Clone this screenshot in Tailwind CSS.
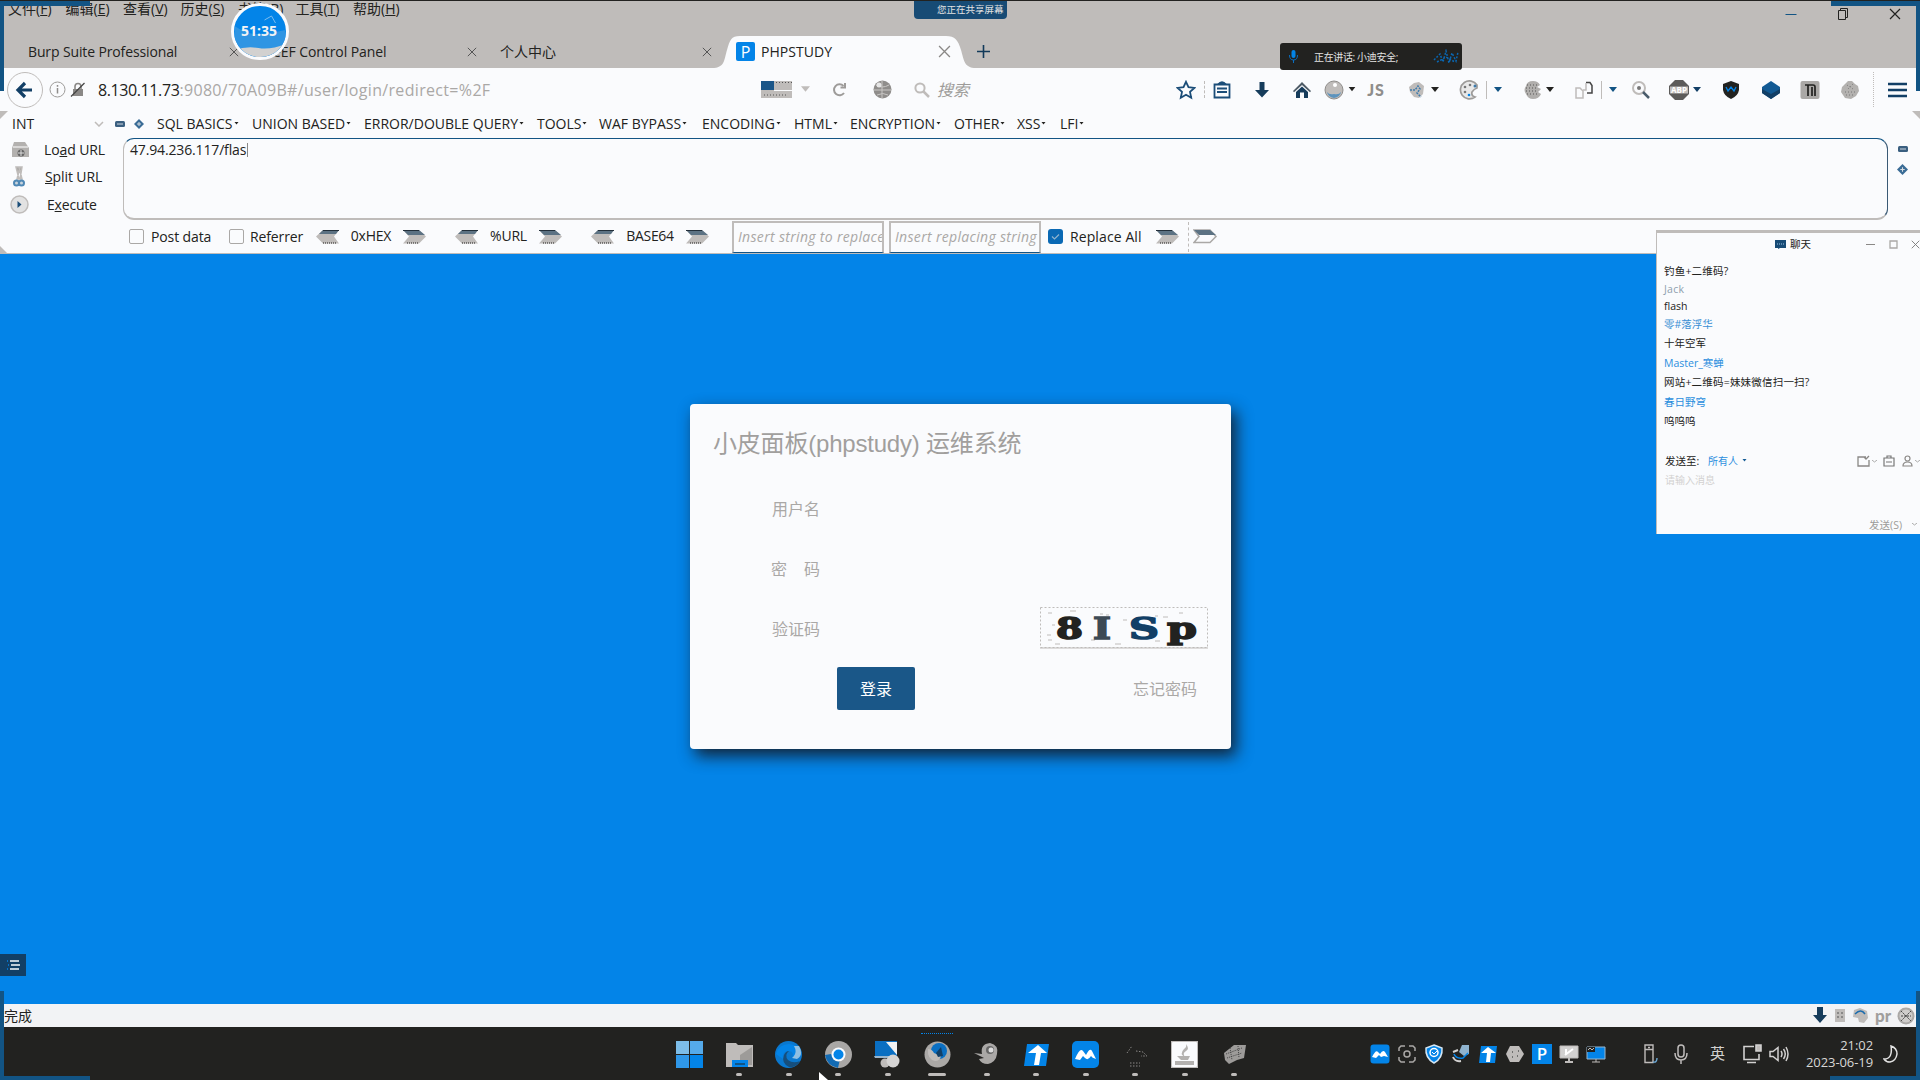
<!DOCTYPE html>
<html lang="zh-CN">
<head>
<meta charset="utf-8">
<title>PHPSTUDY</title>
<script src="https://cdn.jsdelivr.net/npm/@tailwindcss/browser@4"></script>
</head>
<body class="w-[1920px] h-[1080px] overflow-hidden bg-[#0384e8] text-[#222220] font-['Open_Sans','Noto_Sans_CJK_SC',sans-serif] text-[14px] leading-none whitespace-nowrap">
<svg class="hidden">
  <symbol id="caret" viewBox="0 0 8 6"><path d="M0 0h8L4 5z" fill="currentColor"/></symbol>
  <symbol id="x" viewBox="0 0 12 12"><path d="M1 1l10 10M11 1L1 11" stroke="currentColor" stroke-width="1.2" fill="none"/></symbol>
  <symbol id="arr" viewBox="0 0 25 15"><path d="M1 1h16l7 6.500-7 7H1l6-7z" fill="#bfbcba"/><path d="M1 1h16l6 5H6z" fill="#5c7283"/><path d="M1 1.500h16" stroke="#222f3a"/><path d="M5 14h12" stroke="#222220" stroke-dasharray="1 1"/></symbol>
  <symbol id="arl" viewBox="0 0 25 15"><path d="M24 1H8L1 7.500l7 7h16l-5-7z" fill="#bfbcba"/><path d="M24 1H8L4 5h17z" fill="#5c7283"/><path d="M8 1.500h16" stroke="#222f3a"/><path d="M8 14h14" stroke="#222220" stroke-dasharray="1 1"/></symbol>
  <symbol id="diamond" viewBox="0 0 10 10"><path d="M5 0l5 5-5 5-5-5z" fill="#3a6c96"/><path d="M5 3v4M3 5h4" stroke="#d8dde2"/></symbol>
  <symbol id="minus" viewBox="0 0 10 6"><rect width="10" height="6" rx="1.500" fill="#3a5f80"/><path d="M2 3h6" stroke="#cfd8e0"/></symbol>
</svg>
<div class="relative flex h-[1080px] w-[1920px] flex-col">

  <!-- window title area -->
  <header class="flex h-[68px] flex-col border-t border-[#222220] bg-[#bfbcba]">
    <div class="flex h-[34px]">
      <nav class="flex h-[16px] items-center pl-[8px] text-[14px] *:w-[57.500px]">
        <span>文件(<u>F</u>)</span><span>编辑(<u>E</u>)</span><span>查看(<u>V</u>)</span><span>历史(<u>S</u>)</span><span>书签(<u>B</u>)</span><span>工具(<u>T</u>)</span><span>帮助(<u>H</u>)</span>
      </nav>
      <div class="ml-auto flex h-[26px] items-center gap-[40px] pr-[19px]">
        <svg class="h-3 w-3" viewBox="0 0 12 12"><path d="M.5 6.500h11" stroke="#125484"/></svg>
        <svg class="h-3 w-3" viewBox="0 0 12 12" fill="none" stroke="#222220"><path d="M1.500 2.500h7v9h-7zM3.500 2V.5h7v9H9"/></svg>
        <svg class="h-3 w-3"><use href="#x"/></svg>
      </div>
    </div>
    <div class="flex h-[33px] items-center">
      <div class="flex w-[239px] items-center justify-between pl-[28px]"><span class="tracking-[-0.130px]">Burp Suite Professional</span><svg class="h-[10px] w-[10px] text-[#555]"><use href="#x"/></svg></div>
      <div class="flex w-[238px] items-center justify-between pl-[25px]"><span class="tracking-[-0.080px]">BeEF Control Panel</span><svg class="h-[10px] w-[10px] text-[#555]"><use href="#x"/></svg></div>
      <div class="flex w-[235px] items-center justify-between pl-[23px]"><span>个人中心</span><svg class="h-[10px] w-[10px] text-[#555]"><use href="#x"/></svg></div>
      <div class="relative flex h-full w-[262px] items-center">
        <svg class="absolute left-0 top-0 h-[33px] w-[266px]" viewBox="0 0 266 33" preserveAspectRatio="none"><path d="M0 33c13 0 12-8 15-18S19 1 28 1h206c9 0 12 4 15 14s3 18 15 18z" fill="#fafbfd"/></svg>
        <div class="relative flex w-full items-center pl-[24px]">
          <span class="flex h-[19px] w-[19px] items-center justify-center rounded-[2px] bg-[#0384e8] text-[16px] text-white">P</span>
          <span class="ml-[6px] tracking-[0.050px]">PHPSTUDY</span>
          <svg class="ml-auto mr-[23px] h-[13px] w-[13px] text-[#8a8886]"><use href="#x"/></svg>
        </div>
      </div>
      <svg class="ml-[3px] h-[13px] w-[13px]" viewBox="0 0 13 13"><path d="M6.500 0v13M0 6.500h13" stroke="#123a5a" stroke-width="1.600"/></svg>
    </div>
  </header>

  <!-- address bar -->
  <div class="flex h-[43px] items-center bg-[#fafbfd]">
    <svg class="ml-[6px] h-[38px] w-[38px]" viewBox="0 0 38 38"><circle cx="19" cy="19" r="17.500" fill="none" stroke="#bfbcba"/><path d="M26 19H13M19 12l-7 7 7 7" fill="none" stroke="#123f66" stroke-width="3.200"/></svg>
    <svg class="ml-[5px] h-[17px] w-[17px]" viewBox="0 0 17 17"><circle cx="8.500" cy="8.500" r="7.500" fill="none" stroke="#9d9b99"/><path d="M8.500 7v5.500M8.500 4v1.700" stroke="#8f8d8b" stroke-width="1.500"/></svg>
    <svg class="ml-[4px] h-[16px] w-[16px]" viewBox="0 0 16 16"><path d="M3 7h10v7H3z" fill="#8a8886"/><path d="M5 7V4.500a3 3 0 016 0V7" fill="none" stroke="#8a8886" stroke-width="1.600"/><path d="M1 14.500L14.500 1" stroke="#444" stroke-width="1.300"/></svg>
    <span class="ml-[12px] w-[663px] text-[16px] tracking-[-0.400px]">8.130.11.73<span class="text-[#aaa8a6] tracking-[0.330px]">:9080/70A09B#/user/login/redirect=%2F</span></span>
    <svg class="h-[17px] w-[31px]" viewBox="0 0 31 17"><path d="M0 0h31v17H0z" fill="#bfbcba"/><path d="M0 0h13v9H0z" fill="#1b5688"/><path d="M15 1.500h16M3 14h24" stroke="#555" stroke-dasharray="1 2"/><path d="M13 9.500h18" stroke="#fafbfd"/></svg>
    <svg class="ml-[9px] h-[7px] w-[9px] text-[#bfbcba]"><use href="#caret"/></svg>
    <svg class="ml-[22px] h-[15px] w-[15px]" viewBox="0 0 15 15" fill="none" stroke="#9d9b99" stroke-width="2"><path d="M12 11A5.500 5.500 0 1 1 11.500 4"/><path d="M8.500 5.500H13V1"/></svg>
    <svg class="ml-[26px] h-[19px] w-[19px]" viewBox="0 0 19 19"><circle cx="9.500" cy="9.500" r="9" fill="#8f8d8b"/><path d="M3 5q6 4 13 0M1 10h17M4 15q6-3 11 0M9 1v17" stroke="#c9c7c5" fill="none"/><circle cx="6" cy="5" r="2.500" fill="#e6e6e6"/></svg>
    <svg class="ml-[22px] h-[16px] w-[16px]" viewBox="0 0 16 16" fill="none" stroke="#bfbcba"><circle cx="6" cy="6" r="4.600" stroke-width="2"/><path d="M9.500 9.500l5.500 5.500" stroke-width="2.500"/></svg>
    <span class="ml-[7px] w-[239px] text-[16px] italic text-[#9d9b99]">搜索</span>

    <div class="flex shrink-0 items-center">
      <svg class="h-[20px] w-[20px]" viewBox="0 0 20 20"><path d="M10 1.800l2.500 5.400 5.900.7-4.400 4 1.200 5.900-5.200-3-5.200 3L6 11.900l-4.400-4 5.900-.7z" fill="none" stroke="#1b4d78" stroke-width="1.800"/></svg>
      <i class="ml-[8px] h-[17px] w-px border-l border-dashed border-[#bfbcba]"></i>
      <svg class="ml-[7px] h-[20px] w-[20px]" viewBox="0 0 20 20" fill="none" stroke="#1b4d78" stroke-width="1.800"><path d="M2.500 4.500h15v13h-15z"/><path d="M6 4.500Q10 0 14 4.500" fill="#1b4d78"/><path d="M5 8.500h10M5 12h10"/></svg>
      <svg class="ml-[20px] h-[20px] w-[20px]" viewBox="0 0 20 20"><path d="M7.500 2h5v8H17l-7 7.500L3 10h4.500z" fill="#163c5b"/></svg>
      <svg class="ml-[20px] h-[20px] w-[20px]" viewBox="0 0 20 20"><path d="M10 2l9 9-1 1.300L10 5l-8 7.300L1 11z" fill="#4d5a65"/><path d="M10 6.500l6 5.500v6h-4v-5.500H8V18H4v-6z" fill="#163c5b"/></svg>
      <svg class="ml-[12px] h-[20px] w-[20px]" viewBox="0 0 20 20"><circle cx="10" cy="10" r="9" fill="#bfbcba" stroke="#8f8d8b"/><path d="M3 12q1 5 7 6 6-1 7-6-2 3-7 2-5 1-7-2z" fill="#5c93bd"/><circle cx="11" cy="5" r="2" fill="#fff"/></svg>
      <svg class="ml-[4px] h-[5px] w-[8px]"><use href="#caret"/></svg>
      <span class="ml-[10px] w-[20px] text-center font-['Lato'] text-[16px] font-black tracking-[1px] text-[#8f8d8b]">JS</span>
      <svg class="ml-[21px] h-[20px] w-[20px]" viewBox="0 0 20 20"><path d="M2 7l5-4 5-1 5 4-1 8-4 4-5-1-4-5z" fill="#bfbcba"/><path d="M3 10h5l3-4 2 3-3 4 4 4" stroke="#3f7bab" fill="none" stroke-width="1.500" stroke-dasharray="2 1"/></svg>
      <svg class="ml-[4px] h-[6px] w-[8px]"><use href="#caret"/></svg>
      <svg class="ml-[20px] h-[20px] w-[20px]" viewBox="0 0 20 20"><path d="M18 5A9 9 0 1 0 16 17q-4-1-3-5 2-3 5-4z" fill="#e8e8e8" stroke="#9d9b99" stroke-width="1.700"/><g fill="#777"><circle cx="6" cy="7" r="1.300"/><circle cx="11" cy="5" r="1.300"/><circle cx="6" cy="12" r="1.300"/><circle cx="10" cy="15" r="1.300" fill="#0384e8"/><circle cx="16" cy="6" r="1.500" fill="#3f7bab"/></g></svg>
      <i class="ml-[7px] h-[18px] w-px bg-[#bfbcba]"></i>
      <svg class="ml-[7px] h-[6px] w-[8px] text-[#125484]"><use href="#caret"/></svg>
      <svg class="ml-[21px] h-[20px] w-[20px]" viewBox="0 0 20 20"><path d="M17 5Q15 1 10 1 4 1 3 6q-3 4 0 8 2 5 7 5 6 0 8-5l-3-2 3-3-4-2z" fill="#b0aeac"/><path d="M4 5h10M3 8h10M3 11h12M4 14h11" stroke="#555" stroke-dasharray="1 2"/></svg>
      <svg class="ml-[3px] h-[6px] w-[8px]"><use href="#caret"/></svg>
      <svg class="ml-[20px] h-[20px] w-[20px]" viewBox="0 0 20 20" fill="none"><path d="M2 8h4l3 3v7H2z" stroke="#bfbcba" stroke-width="1.500"/><path d="M12 2.500h4l2 3V13h-5" stroke="#444" stroke-width="1.500"/><path d="M12 3v7H9" stroke="#bfbcba" stroke-width="1.500"/></svg>
      <i class="ml-[7px] h-[18px] w-px bg-[#bfbcba]"></i>
      <svg class="ml-[7px] h-[6px] w-[8px] text-[#125484]"><use href="#caret"/></svg>
      <svg class="ml-[14px] h-[20px] w-[20px]" viewBox="0 0 20 20" fill="none"><circle cx="8" cy="8" r="6" stroke="#bfbcba" stroke-width="2"/><circle cx="8" cy="8" r="2" fill="#777"/><path d="M12 12l6 6" stroke="#4a5c6b" stroke-width="2.500"/></svg>
      <svg class="ml-[18px] h-[20px] w-[20px]" viewBox="0 0 20 20"><path d="M6 0h8l6 6v8l-6 6H6l-6-6V6z" fill="#5c5b5a"/><path d="M1 6.500h18v7H1z" fill="#bfbcba"/><text x="10" y="13" font-size="8" font-weight="700" text-anchor="middle" fill="#fff">ABP</text></svg>
      <svg class="ml-[4px] h-[6px] w-[8px] text-[#123f66]"><use href="#caret"/></svg>
      <svg class="ml-[20px] h-[20px] w-[20px]" viewBox="0 0 20 20"><path d="M10 1l8 3v6q-1 6-8 9-7-3-8-9V4z" fill="#222220"/><path d="M5 7l2 4 3-4 3 4 2-4" stroke="#0384e8" stroke-width="1.300" fill="none"/></svg>
      <svg class="ml-[20px] h-[20px] w-[20px]" viewBox="0 0 20 20"><path d="M10 1l9 6v6l-9 6-9-6V7z" fill="#125a94"/><path d="M1 9l9 5 9-5v4l-9 6-9-6z" fill="#123f66"/></svg>
      <svg class="ml-[19px] h-[20px] w-[20px]" viewBox="0 0 20 20"><rect x=".5" y="1" width="19" height="18" rx="2" fill="#aaa8a6"/><path d="M5 5h8q2 0 2 2v9M8 5v11M12 7v9" stroke="#222220" stroke-width="1.700" fill="none"/></svg>
      <svg class="ml-[20px] h-[20px] w-[20px]" viewBox="0 0 20 20"><path d="M5 4l3-3h4l3 3 3 2 1 5-3 5-5 3-6-1-4-6 1-5z" fill="#b3b1af"/><path d="M5 12h10M6 15h8M7 5l6 4M13 4l-5 5" stroke="#777" stroke-dasharray="1 2"/></svg>
      <i class="ml-[13px] h-[35px] w-px border-l border-dotted border-[#bfbcba]"></i>
      <svg class="ml-[14px] h-[18px] w-[19px]" viewBox="0 0 19 18"><path d="M0 3h19M0 9h19M0 15h19" stroke="#123f66" stroke-width="2.600"/></svg>
    </div>
  </div>

  <!-- HackBar -->
  <section class="flex h-[143px] flex-col border-b border-[#bfbcba] bg-[#fafbfd]">
    <div class="flex h-[27px] items-center pb-[2px] pl-[12px] text-[14px]">
      <span class="w-[82px]">INT</span>
      <svg class="h-[6px] w-[10px]" viewBox="0 0 10 6" fill="none" stroke="#bfbcba" stroke-width="1.500"><path d="M1 1l4 4 4-4"/></svg>
      <svg class="ml-[11px] h-[6px] w-[10px]"><use href="#minus"/></svg>
      <svg class="ml-[9px] h-[10px] w-[10px]"><use href="#diamond"/></svg>
      <div class="ml-[13px] flex [&>span]:flex [&>span]:items-center [&>span]:gap-px">
        <span class="w-[95px]">SQL BASICS<svg class="h-[3px] w-[5px]"><use href="#caret"/></svg></span>
        <span class="w-[112px]">UNION BASED<svg class="h-[3px] w-[5px]"><use href="#caret"/></svg></span>
        <span class="w-[173px]">ERROR/DOUBLE QUERY<svg class="h-[3px] w-[5px]"><use href="#caret"/></svg></span>
        <span class="w-[62px]">TOOLS<svg class="h-[3px] w-[5px]"><use href="#caret"/></svg></span>
        <span class="w-[103px]">WAF BYPASS<svg class="h-[3px] w-[5px]"><use href="#caret"/></svg></span>
        <span class="w-[92px]">ENCODING<svg class="h-[3px] w-[5px]"><use href="#caret"/></svg></span>
        <span class="w-[56px]">HTML<svg class="h-[3px] w-[5px]"><use href="#caret"/></svg></span>
        <span class="w-[104px]">ENCRYPTION<svg class="h-[3px] w-[5px]"><use href="#caret"/></svg></span>
        <span class="w-[63px]">OTHER<svg class="h-[3px] w-[5px]"><use href="#caret"/></svg></span>
        <span class="w-[43px]">XSS<svg class="h-[3px] w-[5px]"><use href="#caret"/></svg></span>
        <span>LFI<svg class="h-[3px] w-[5px]"><use href="#caret"/></svg></span>
      </div>
    </div>
    <div class="flex h-[82px]">
      <div class="flex w-[123px] flex-col text-[14px]">
        <div class="flex h-[24px] items-center pl-[10px]"><svg class="h-[18px] w-[20px]" viewBox="0 0 20 18"><path d="M4 1h11l4 6v9H2V7z" fill="#b3b1af"/><path d="M3 6h15" stroke="#fff"/><circle cx="11" cy="12" r="3.500" fill="#666"/><path d="M8 12h6M11 9v6" stroke="#ddd"/></svg><span class="ml-[14px] tracking-[-0.100px]">Lo<u>a</u>d URL</span></div>
        <div class="flex h-[29px] items-center pl-[10px]"><svg class="h-[22px] w-[20px]" viewBox="0 0 20 22"><path d="M6 1h3l3 12H9zM12 1h-2L7 13h3z" fill="#aaa8a6" stroke="#bfbcba" stroke-width="1.500"/><g fill="#c9d4dd" stroke="#4f88b5" stroke-width="2"><circle cx="6.500" cy="17" r="2.500"/><circle cx="11.500" cy="17" r="2.500"/></g></svg><span class="ml-[15px] tracking-[-0.100px]"><u>S</u>plit URL</span></div>
        <div class="flex h-[27px] items-center pl-[10px]"><svg class="h-[19px] w-[19px]" viewBox="0 0 19 19"><circle cx="9.500" cy="9.500" r="8.500" fill="#e2e2e2" stroke="#bfbcba" stroke-width="1.500"/><path d="M7.500 6l4 3.500-4 3.500z" fill="#1b4d78"/></svg><span class="ml-[18px] tracking-[-0.200px]">E<u>x</u>ecute</span></div>
      </div>
      <div class="w-[1765px] rounded-[11px] border border-b-2 border-[#bfbcba] border-t-[#125484] border-r-[#3a5a75] pl-[6px] pt-[4px] text-[14px]"><span class="inline-block border-r border-[#8a8886] pr-px tracking-[-0.150px]">47.94.236.117/flas</span></div>
      <div class="flex flex-col items-center gap-[12px] pl-[9px] pt-[8px]"><svg class="h-[6px] w-[10px]"><use href="#minus"/></svg><svg class="h-[11px] w-[11px]"><use href="#diamond"/></svg></div>
    </div>
    <div class="flex h-[33px] items-center pl-[129px]">
      <i class="h-[15px] w-[15px] rounded-[2px] border border-[#aaa8a6]"></i><span class="ml-[7px] w-[78px] tracking-[-0.120px]">Post data</span>
      <i class="h-[15px] w-[15px] rounded-[2px] border border-[#aaa8a6]"></i><span class="ml-[6px] w-[65px] tracking-[-0.120px]">Referrer</span>
      <svg class="h-[15px] w-[25px]"><use href="#arl"/></svg><span class="w-[62px] pb-[2px] text-center tracking-[-0.200px]">0xHEX</span><svg class="h-[15px] w-[25px]"><use href="#arr"/></svg>
      <svg class="ml-[27px] h-[15px] w-[25px]"><use href="#arl"/></svg><span class="w-[59px] pb-[2px] text-center tracking-[-0.200px]">%URL</span><svg class="h-[15px] w-[25px]"><use href="#arr"/></svg>
      <svg class="ml-[27px] h-[15px] w-[25px]"><use href="#arl"/></svg><span class="w-[70px] pb-[2px] text-center tracking-[-0.300px]">BASE64</span><svg class="h-[15px] w-[25px]"><use href="#arr"/></svg>
      <div class="ml-[22px] flex h-[32px] w-[152px] items-center overflow-hidden border-2 border-b border-[#bfbcba] border-b-[#125484] pl-[4px] text-[14px] italic tracking-[0.320px] text-[#aaa8a6]">Insert string to replace</div>
      <div class="ml-[5px] flex h-[32px] w-[152px] items-center overflow-hidden border-2 border-b border-[#bfbcba] border-b-[#125484] pl-[4px] text-[14px] italic tracking-[0.320px] text-[#aaa8a6]">Insert replacing string</div>
      <svg class="ml-[7px] h-[15px] w-[15px]" viewBox="0 0 15 15"><rect width="15" height="15" rx="3" fill="#0a69b4"/><path d="M4 7.500l2.500 2.500L11 5.500" stroke="#8fb3ce" fill="none" stroke-width="1.200"/></svg>
      <span class="ml-[7px] w-[85px] tracking-[0.100px]">Replace All</span>
      <svg class="h-[15px] w-[25px]"><use href="#arr"/></svg>
      <i class="ml-[8px] h-[30px] border-l border-dashed border-[#bfbcba]"></i>
      <svg class="ml-[4px] h-[15px] w-[25px]" viewBox="0 0 25 15"><path d="M1 1h16l6 6.500-6 6H1l5-6z" fill="#fafbfd" stroke="#aaa8a6" stroke-width="1.500"/><path d="M1 1h16l6 5H6z" fill="#5c7283"/></svg>
    </div>
  </section>

  <!-- page -->
  <main class="flex h-[750px] bg-[#0384e8] pl-[690px] pt-[150px]">
    <form class="flex h-[345px] w-[541px] flex-col rounded-[4px] bg-[#fafbfd] pl-[23px] pr-[23px] text-[16px] text-[#aaa8a6] shadow-[5px_7px_16px_rgba(20,25,35,0.9)]">
      <h1 class="mt-[26px] h-[28px] font-['Liberation_Sans','Noto_Sans_CJK_SC',sans-serif] text-[24px] leading-[28px] tracking-[-0.200px] text-[#a19f9d]">小皮面板(phpstudy) 运维系统</h1>
      <div class="mt-[21px] flex h-[60px] items-center pl-[59px]">用户名</div>
      <div class="flex h-[60px] items-center justify-between pl-[58px] pr-[388px]"><span>密</span><span>码</span></div>
      <div class="flex h-[60px] items-center justify-between pl-[59px]">验证码
        <svg class="-mt-[3px] h-[42px] w-[168px]" viewBox="0 0 168 42"><rect x=".5" y=".5" width="167" height="40" fill="none" stroke="#bfbcba" stroke-dasharray="2 2"/><path d="M0 41h168" stroke="#bfbcba"/><path d="M8 6h4m18-2h6m24 3h3m20 6h4m-75 5h3m-8 10h4m55-20h3m70-2h4m-20 4h5m14 6h3m-30 18h5m-45 3h6m-30-4h4m-40 4h5m95-28h3m-110 24h4m55-3h3" stroke="#bfbcba" fill="none"/>
        <g font-family="DejaVu Serif" font-weight="700" font-size="30" stroke-width="1.500" lengthAdjust="spacingAndGlyphs"><text x="16" y="32" fill="#222220" stroke="#222220" textLength="27" lengthAdjust="spacingAndGlyphs">8</text><text x="53" y="32" fill="#3d4a55" stroke="#3d4a55" textLength="18" lengthAdjust="spacingAndGlyphs">I</text><text x="89" y="32" fill="#123f66" stroke="#123f66" textLength="30" lengthAdjust="spacingAndGlyphs">S</text><text x="127" y="32" fill="#222220" stroke="#222220" textLength="30" lengthAdjust="spacingAndGlyphs">p</text></g></svg>
      </div>
      <div class="mt-[8px] flex items-center justify-between pl-[124px] pr-[11px]">
        <button class="h-[43px] w-[78px] rounded-[2px] bg-[#1a5788] text-[16px] text-white">登录</button>
        <span>忘记密码</span>
      </div>
    </form>
  </main>

  <!-- add-on status bar -->
  <div class="flex h-[23px] items-center bg-[#f2f3f5] pl-[4px] pr-[5px] text-[14px]">
    <span>完成</span>
    <svg class="ml-auto h-[17px] w-[16px]" viewBox="0 0 16 17"><path d="M5 0h6v8h4l-7 8-7-8h4z" fill="#163c5b"/></svg>
    <svg class="ml-[7px] h-[13px] w-[10px]" viewBox="0 0 10 13"><path d="M0 0h10v13H0z" fill="#bfbcba"/><path d="M3 3v6M7 3v6" stroke="#555" stroke-dasharray="2 2"/></svg>
    <svg class="ml-[7px] h-[17px] w-[17px]" viewBox="0 0 17 17"><path d="M2 3l6-2 7 3 1 7-4 5-5-1-1-4-5-1z" fill="#bfbcba"/><path d="M3 7q6-6 10 0" fill="none" stroke="#1b6cae" stroke-width="1.500"/></svg>
    <span class="ml-[6px] w-[18px] font-['Lato'] text-[17px] font-black leading-[16px] text-[#a19f9d]">pr</span>
    <svg class="ml-[4px] h-[18px] w-[18px]" viewBox="0 0 18 18"><circle cx="9" cy="9" r="7.500" fill="#cfcdcb" stroke="#aaa8a6" stroke-width="2"/><path d="M4 4l10 10M14 4L4 14M4 9h10" stroke="#444" stroke-dasharray="2 1"/></svg>
  </div>

  <!-- taskbar -->
  <footer class="flex h-[53px] bg-[#222220] pl-[665px]">
    <div class="flex [&>span]:flex [&>span]:w-[49.500px] [&>span]:flex-col [&>span]:items-center [&>span]:pt-[14px] [&_svg]:h-[27px] [&_svg]:w-[27px] [&_b]:mt-[5px] [&_b]:h-[3px] [&_b]:w-[6px] [&_b]:rounded-full [&_b]:bg-[#bfbcba]">
      <span><svg viewBox="0 0 27 27"><path d="M0 0h13v13H0z" fill="#7dbde8"/><path d="M14 0h13v13H14z" fill="#55aaea"/><path d="M0 14h13v13H0z" fill="#2f97e8"/><path d="M14 14h13v13H14z" fill="#0384e8"/></svg></span>
      <span><svg viewBox="0 0 27 27"><path d="M0 2h10l2 2h15v22H0z" fill="#bfbcba"/><path d="M14 14l12-8v18H14z" fill="#9d9b99"/><path d="M6 19h16v7H6z" fill="#0384e8"/><path d="M9 23h10" stroke="#125484" stroke-width="2"/></svg><b></b></span>
      <span><svg viewBox="0 0 27 27"><circle cx="13.500" cy="13.500" r="13.500" fill="#0a78cf"/><path d="M1 13Q4 3 14 3q11 1 11 9 0 5-8 5 3-6-3-7-7 0-6 8" fill="#0384e8"/><path d="M24 5q5 9-2 13l-5-1q6-5 2-12z" fill="#8fbfe2"/><path d="M14 10q-5 4-1 9 5 4 12 1-4 7-11 6-8-4-5-12 2-4 5-4z" fill="#164e7c"/></svg><b></b></span>
      <span><svg viewBox="0 0 27 27"><circle cx="13.500" cy="13.500" r="13.500" fill="#a9a7a5"/><path d="M0 14q2 11 13 13l2-9-9-5z" fill="#126bb4"/><circle cx="13.500" cy="13.500" r="7" fill="#fafbfd"/><circle cx="13.500" cy="13.500" r="5" fill="#0384e8"/></svg><b></b></span>
      <span><svg viewBox="0 0 27 27"><path d="M1 0h22v15H1z" fill="#0a6fc2"/><path d="M12 1h11v13z" fill="#f2f2f2"/><path d="M0 15h17v2H1z" fill="#9bb6cc"/><circle cx="11" cy="22" r="4.500" fill="#bfbcba"/><circle cx="19" cy="20" r="6.500" fill="#d5d4d3"/></svg><b></b></span>
      <span class="relative"><svg viewBox="0 0 27 27"><circle cx="13.500" cy="13.500" r="13" fill="#aaa8a6"/><circle cx="15" cy="10" r="8" fill="#0a6fc2"/><path d="M4 8q4 0 6 4l7 3q-1 5-6 5-8-2-7-12z" fill="#bfbcba"/><path d="M12 12l5-6 2 9-5 1z" fill="#123f66"/></svg><b class="!w-[18px]"></b><i class="absolute top-[6px] w-[32px] border-t border-dotted border-[#0384e8]"></i></span>
      <span><svg viewBox="0 0 27 27"><path d="M1 12l8 1Q7 3 17 2q9 2 7 11-1 8-9 10-7 0-9-5l5-1z" fill="#aaa8a6"/><circle cx="17" cy="9" r="4" fill="#666"/><circle cx="18" cy="9" r="2.500" fill="#ddd"/></svg><b></b></span>
      <span><svg viewBox="0 0 27 27"><path d="M4 3h22l-3 22H1z" fill="#0384e8"/><path d="M15 4l9 8h-6l-2 12h-5l2-12H5z" fill="#fff"/></svg><b></b></span>
      <span><svg viewBox="0 0 27 27"><rect width="27" height="27" rx="5" fill="#0384e8"/><path d="M3 18q5-12 8-8l3 4q4-8 6-4l4 8q-4-1-5-3-3 5-6 2l-2-2-3 4z" fill="#fff"/></svg><b></b></span>
      <span><svg viewBox="0 0 27 27" fill="none" stroke="#8a8886" stroke-dasharray="1.500 1.500"><path d="M5 12l5-7M14 10l7 1 4 4h-6M8 22h10M8 25h10"/></svg><b></b></span>
      <span><svg viewBox="0 0 27 27"><rect width="27" height="27" rx="2" fill="#fafbfd" stroke="#bfbcba" stroke-width="2"/><path d="M15 3q4 5 0 7t-1 6q-6-3-1-8 3-2 2-5zM6 15h13l-2 4h-7zM4 20h19v4H4z" fill="#b3b1af"/></svg><b></b></span>
      <span><svg viewBox="0 0 27 27"><path d="M3 12L13 4h12l-2 13-7 2-8 4-4-4z" fill="#9d9b99"/><path d="M5 13l16-6M6 17l15-5M9 7l2 12M17 5l1 12" stroke="#444" stroke-dasharray="1 1"/></svg><b></b></span>
    </div>
    <div class="ml-auto flex h-[53px] items-center">
      <div class="flex items-center gap-[7px] [&>svg]:h-[20px] [&>svg]:w-[20px]">
        <svg viewBox="0 0 20 20"><rect x=".5" y=".5" width="19" height="19" rx="3" fill="#0384e8"/><path d="M2 13q4-8 6-5l2 2q3-5 5-2l3 5-4-1-3 1-2-2-3 3z" fill="#fff"/></svg>
        <svg viewBox="0 0 20 20" fill="none" stroke="#aaa8a6" stroke-width="1.500"><path d="M2 7V4l2-2h4M12 2h4l2 2v3M2 13v3l2 2h4M12 18h4l2-2v-3"/><circle cx="10" cy="10" r="3"/></svg>
        <svg viewBox="0 0 20 20"><path d="M10 1l8 3q1 10-8 15Q1 14 2 4z" fill="#0384e8" stroke="#d6e6f2" stroke-width="1.500"/><circle cx="10" cy="8.500" r="4" fill="none" stroke="#fff" stroke-width="1.500"/><path d="M8 8l2 2 3-3" stroke="#fff" fill="none"/></svg>
        <svg viewBox="0 0 20 20"><path d="M11 1h7v9l-5 2-5-4z" fill="#8fb3ce"/><path d="M2 8l5-2M2 13q2 5 8 4" stroke="#d2d1d0" stroke-width="2" fill="none"/><path d="M3 10q2 5 9 4l5-5" stroke="#0384e8" stroke-width="1.500" fill="none"/></svg>
        <svg viewBox="0 0 20 20"><path d="M3 2h16l-2 17H1z" fill="#0384e8"/><path d="M10 3l8 6h-5l-1 9H8l1-9H3z" fill="#fff"/></svg>
        <svg viewBox="0 0 20 20"><path d="M5 2h9l5 8-5 8H5l-4-8z" fill="#bfbcba"/><path d="M7 8h1M12 12h1M7 13h1M13 7h1" stroke="#555" stroke-width="1.500"/></svg>
        <svg viewBox="0 0 20 20"><path d="M0 0h20v20H0z" fill="#0384e8"/><text x="10" y="16" font-size="17" font-weight="600" text-anchor="middle" fill="#fff">P</text></svg>
        <svg viewBox="0 0 20 20"><path d="M1 2h18v12H1z" fill="#d2d1d0" stroke="#bfbcba"/><path d="M6 11l8-6M7 5v5" stroke="#fff" stroke-width="2"/><path d="M10 14v4M6 18h8" stroke="#bfbcba" stroke-width="2"/></svg>
        <svg viewBox="0 0 20 20"><path d="M1 3h18v12H1z" fill="#0384e8" stroke="#9bb6cc"/><path d="M1 3h8v5H1z" fill="#222220"/><path d="M2 6l2-2 2 2 2-2" stroke="#bfbcba" fill="none"/><path d="M10 15v3M6 18h8" stroke="#bfbcba"/></svg>
      </div>
      <svg class="ml-[35px] h-[22px] w-[18px]" viewBox="0 0 18 22" fill="none" stroke="#bfbcba" stroke-width="1.400"><path d="M4 6.500h8v13H4zM4 6V2h8v4M7 4.500h2"/><path d="M12 19q4 1 4-4" stroke="#6da9d6"/></svg>
      <svg class="ml-[13px] h-[22px] w-[18px]" viewBox="0 0 18 22" fill="none" stroke="#bfbcba" stroke-width="1.500"><rect x="6" y="2" width="6" height="12" rx="3"/><path d="M3 10q0 7 6 7t6-7M9 17v4"/></svg>
      <span class="ml-[20px] text-[15px] text-[#d2d1d0]">英</span>
      <svg class="ml-[17px] h-[20px] w-[20px]" viewBox="0 0 20 20" fill="none" stroke="#d2d1d0" stroke-width="1.600"><path d="M12 2.500H2v13h15V10M5 18.500h9"/><path d="M14 1h5v6h-5z" fill="#bfbcba"/></svg>
      <svg class="ml-[7px] h-[20px] w-[20px]" viewBox="0 0 20 20" fill="none" stroke="#d2d1d0" stroke-width="1.500"><path d="M1 7.500h3l5-4v13l-5-4H1zM12 7q2 3 0 6M14.500 5q3.500 5 0 10M17 3q4 7 0 14"/></svg>
      <div class="ml-[14px] flex w-[70px] flex-col items-end gap-[4px] pt-px text-[13px] tracking-[-0.080px] text-[#d8d7d6]"><span>21:02</span><span>2023-06-19</span></div>
      <svg class="ml-[10px] mr-[21px] h-[18px] w-[16px]" viewBox="0 0 16 18" fill="none" stroke="#e2e2e2" stroke-width="1.500"><path d="M8 1q6 2 6 8-1 7-7 8-4 0-6-3 9 0 7-13z"/></svg>
    </div>
  </footer>

  <!-- screen-share frame corners -->
  <i class="absolute left-0 top-px h-[5px] w-[90px] bg-[#125484]"></i><i class="absolute left-0 top-px h-[90px] w-[4px] bg-[#125484]"></i>
  <i class="absolute right-0 top-px h-[5px] w-[89px] bg-[#125484]"></i><i class="absolute right-0 top-px h-[90px] w-[4px] bg-[#125484]"></i>
  <i class="absolute bottom-0 left-0 h-[4px] w-[90px] bg-[#125484]"></i><i class="absolute bottom-0 left-0 h-[89px] w-[4px] bg-[#125484]"></i>
  <i class="absolute bottom-0 right-0 h-[4px] w-[90px] bg-[#125484]"></i><i class="absolute bottom-0 right-0 h-[89px] w-[4px] bg-[#125484]"></i>
  <svg class="absolute left-0 top-[111px] h-[8px] w-[8px]" viewBox="0 0 8 8"><path d="M0 0h8L0 8z" fill="#bfbcba"/></svg>
  <svg class="absolute right-0 top-[111px] h-[8px] w-[8px]" viewBox="0 0 8 8"><path d="M0 0h8v8z" fill="#bfbcba"/></svg>
  <svg class="absolute left-0 top-[246px] h-[8px] w-[8px]" viewBox="0 0 8 8"><path d="M0 0l8 8H0z" fill="#bfbcba"/></svg>

  <!-- elapsed-time bubble -->
  <div class="absolute left-[231px] top-[3px] flex h-[57px] w-[58px] items-center justify-center overflow-hidden rounded-full border-[3px] border-[#fafbfd] bg-[#0384e8] text-[14px] font-bold text-[#f2f3f5]">
    <svg class="absolute inset-0 h-full w-full" viewBox="0 0 51 51"><path d="M0 20q12 8 22 8t29-4v27H0z" fill="#2f95e3"/><path d="M0 44q12-4 24-2t27-4v13H0z" fill="#d2d1d0"/><path d="M30 14l7-4 4 7" stroke="#7dbdf0" fill="none"/></svg>
    <span class="relative -mt-[2px] -ml-[2px] tracking-[0px]">51:35</span>
  </div>

  <!-- sharing notice -->
  <div class="absolute left-[914px] top-px flex h-[18px] w-[93px] items-center rounded-b-[4px] bg-[#174b75] pl-[23px] text-[9.500px] text-[#e2e2e2]">您正在共享屏幕</div>

  <!-- current speaker -->
  <div class="absolute left-[1280px] top-[43px] flex h-[27px] w-[182px] items-center rounded-[3px] bg-[#222220] pl-[9px] text-[10px] text-[#e2e2e2]">
    <svg class="h-[13px] w-[9px]" viewBox="0 0 9 13"><rect x="2.500" width="4" height="8" rx="2" fill="#0384e8"/><path d="M.5 5q0 5 4 5t4-5M4.500 10v3" fill="none" stroke="#0a6fc2"/></svg>
    <span class="ml-[16px] tracking-[-0.350px]">正在讲话: 小迪安全;</span>
    <svg class="ml-auto mr-[3px] h-[15px] w-[26px]" viewBox="0 0 26 15" fill="none" stroke="#0a66b0" stroke-width="1.500" stroke-dasharray="2 1.500"><path d="M1 11l6-6 3 8 3-11 3 12 3-10 4 8 2-9M4 13l9-5 9 5"/></svg>
  </div>

  <!-- side drawer handle -->
  <div class="absolute left-0 top-[954px] flex h-[22px] w-[26px] items-center justify-center bg-[#123f66]"><svg class="h-[12px] w-[14px]" viewBox="0 0 14 12" stroke="#fafbfd" stroke-width="1.500"><path d="M4 2h9M5 6h9M4 10h9"/><path d="M1 2h1M2 6h1M1 10h1" stroke="#0384e8"/></svg></div>

  <!-- chat window -->
  <aside class="absolute left-[1656px] top-[230px] flex h-[304px] w-[264px] flex-col border-l border-t-[3px] border-[#bfbcba] bg-[#fafbfd] text-[10.500px]">
    <div class="flex h-[22px] items-center">
      <svg class="ml-[118px] h-[9px] w-[11px]" viewBox="0 0 11 9"><path d="M0 0h11v8H5L3 9V8H0z" fill="#174b75"/><path d="M2 4h7" stroke="#9bc4e6" stroke-dasharray="1 1"/></svg>
      <span class="ml-[4px]">聊天</span>
      <svg class="ml-[55px] h-[9px] w-[9px]" viewBox="0 0 9 9"><path d="M0 4.500h9" stroke="#8a8886"/></svg>
      <svg class="ml-[14px] h-[9px] w-[9px]" viewBox="0 0 9 9"><path d="M1 1h7v7H1z" stroke="#aaa8a6" fill="none" stroke-width="1.300"/></svg>
      <svg class="ml-[13px] h-[9px] w-[9px] text-[#777]"><use href="#x"/></svg>
    </div>
    <div class="flex h-[181px] flex-col pl-[7px] [&>p]:flex [&>p]:items-center">
      <p class="mt-[6px] h-[20px] tracking-[0.200px]">钓鱼+二维码?</p>
      <p class="h-[17px] tracking-[0.300px] text-[#8f9fae]">Jack</p>
      <p class="h-[17px]">flash</p>
      <p class="h-[18px] text-[#3a8fd4]">零#落浮华</p>
      <p class="h-[20px]">十年空军</p>
      <p class="h-[20px] text-[#2a8ede]">Master_寒蝉</p>
      <p class="h-[19px] tracking-[0.200px]">网站+二维码=妹妹微信扫一扫?</p>
      <p class="h-[20px] text-[#2a8ede]">春日野穹</p>
      <p class="h-[19px]">呜呜呜</p>
    </div>
    <div class="flex h-[50px] items-center pl-[8px]">
      <span class="w-[43px]">发送至:</span><span class="text-[10px] text-[#2a8ede]">所有人</span><svg class="ml-[4px] mb-[2px] h-[3px] w-[5px] text-[#125a94]"><use href="#caret"/></svg>
      <svg class="ml-auto h-[12px] w-[13px]" viewBox="0 0 13 12" fill="none" stroke="#8a8886" stroke-width="1.300"><path d="M9 2H1v9h11V5M7 2l2 2 3-3"/></svg>
      <svg class="ml-[2px] h-[3px] w-[5px]" viewBox="0 0 5 3" fill="none" stroke="#aaa"><path d="M0 0l2.500 2L5 0"/></svg>
      <svg class="ml-[6px] h-[12px] w-[12px]" viewBox="0 0 12 12" fill="none" stroke="#777" stroke-width="1.200"><path d="M1 3h10v8H1zM4 3V1h4v2M3 7h6"/></svg>
      <svg class="ml-[7px] h-[12px] w-[11px]" viewBox="0 0 11 12" fill="none" stroke="#8a8886" stroke-width="1.200"><circle cx="5.500" cy="3.500" r="2.500"/><path d="M1 11q0-4 4.500-4T10 11z"/></svg>
      <svg class="ml-[2px] h-[3px] w-[5px]" viewBox="0 0 5 3" fill="none" stroke="#aaa"><path d="M0 0l2.500 2L5 0"/></svg>
    </div>
    <div class="-mt-[11px] pl-[8px] text-[10px] text-[#d2d1d0]">请输入消息</div>
    <div class="mb-[4px] mt-auto flex items-center justify-end pr-[3px] text-[#9d9b99]">发送(S)<svg class="ml-[10px] h-[3px] w-[5px]" viewBox="0 0 5 3" fill="none" stroke="#aaa"><path d="M0 0l2.500 2L5 0"/></svg></div>
  </aside>

  <!-- mouse pointer -->
  <svg class="absolute left-[819px] top-[1072px] h-[8px] w-[9px]" viewBox="0 0 9 8"><path d="M0 0l9 8H0z" fill="#fff"/></svg>
</div>
</body>
</html>
